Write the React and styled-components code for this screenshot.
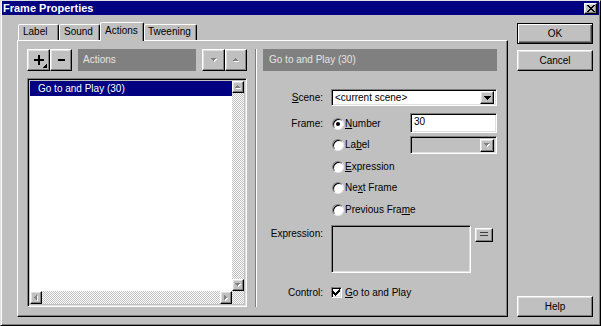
import React from 'react';
import styled, { createGlobalStyle, css } from 'styled-components';

const Global = createGlobalStyle`
  html, body { margin: 0; padding: 0; background: #c0c0c0; }
  body {
    font-family: "Liberation Sans", Arial, sans-serif;
    font-size: 10px;
    color: #000;
    -webkit-font-smoothing: antialiased;
  }
  * { box-sizing: border-box; }
`;

const raised = css`
  border: 1px solid;
  border-color: #fff #000 #000 #fff;
  box-shadow: inset -1px -1px #808080, inset 1px 1px #dfdfdf;
`;

const sunken = css`
  border: 1px solid;
  border-color: #808080 #fff #fff #808080;
  box-shadow: inset 1px 1px #000, inset -1px -1px #dfdfdf;
`;

const dither = css`
  background: repeating-conic-gradient(#c0c0c0 0% 25%, #fff 0% 50%) 0 0 / 2px 2px;
`;

const Window = styled.div`
  width: 601px;
  height: 326px;
  background: #c0c0c0;
  border: 1px solid;
  border-color: #dfdfdf #000 #000 #dfdfdf;
  box-shadow: inset 1px 1px #fff, inset -1px -1px #808080;
  padding: 0 1px;
  display: flex;
  flex-direction: column;
  overflow: hidden;
`;

const TitleBar = styled.div`
  height: 14px;
  flex: none;
  background: #000080;
  display: flex;
  align-items: center;
  justify-content: space-between;
  padding: 0 2px 0 1px;
`;

const Title = styled.span`
  color: #fff;
  font-weight: bold;
  font-size: 11px;
  line-height: 14px;
`;

const CloseButton = styled.div`
  width: 13px;
  height: 11px;
  background: #c0c0c0;
  ${raised};
  display: flex;
  align-items: center;
  justify-content: center;
`;

const Body = styled.div`
  flex: 1;
  display: flex;
  align-items: flex-start;
  gap: 9px;
  padding: 7px 6px 0 15px;
`;

const TabControl = styled.div`
  width: 491px;
  height: 295px;
  display: flex;
  flex-direction: column;
`;

const TabStrip = styled.div`
  height: 18px;
  flex: none;
  display: flex;
  align-items: flex-end;
  padding-left: 1px;
`;

const Tab = styled.div`
  width: ${p => p.$w}px;
  height: ${p => (p.$active ? 19 : 16)}px;
  margin-bottom: ${p => (p.$active ? -1 : 0)}px;
  position: relative;
  z-index: ${p => (p.$active ? 1 : 0)};
  background: #c0c0c0;
  border: 1px solid;
  border-bottom: none;
  border-color: #fff #000 transparent #fff;
  box-shadow: inset -1px 0 #808080;
  border-radius: 2px 2px 0 0;
  padding-left: ${p => p.$pad}px;
  line-height: ${p => (p.$active ? 16 : 14)}px;
  white-space: nowrap;
`;

const Panel = styled.div`
  flex: 1;
  display: flex;
  border: 1px solid;
  border-color: #fff #000 #000 #fff;
  box-shadow: inset -1px -1px #808080;
  padding: 8px 10px 9px 9px;
`;

const LeftPane = styled.div`
  width: 220px;
  display: flex;
  flex-direction: column;
  gap: 7px;
`;

const Toolbar = styled.div`
  height: 22px;
  display: flex;
`;

const ToolButton = styled.div`
  width: ${p => p.$w}px;
  height: 22px;
  margin-left: ${p => p.$ml || 0}px;
  background: #c0c0c0;
  ${raised};
  display: flex;
  align-items: center;
  justify-content: center;
  position: relative;
`;

const CornerMark = styled.svg`
  position: absolute;
  right: 2px;
  bottom: 2px;
`;

const PaneHeader = styled.div`
  width: ${p => (p.$w ? `${p.$w}px` : 'auto')};
  height: 22px;
  margin-left: ${p => p.$ml || 0}px;
  background: #808080;
  color: #e4e4e4;
  line-height: 22px;
  padding-left: ${p => p.$pl}px;
  white-space: nowrap;
`;

const ListBox = styled.div`
  flex: 1;
  ${sunken};
  padding: 2px;
  display: grid;
  grid-template-columns: 1fr 12px;
  grid-template-rows: 1fr 13px;
`;

const ListArea = styled.div`
  background: #fff;
`;

const ListItem = styled.div`
  height: 15px;
  line-height: 15px;
  padding-left: 8px;
  background: ${p => (p.$selected ? '#000080' : 'transparent')};
  color: ${p => (p.$selected ? '#fff' : '#000')};
  white-space: nowrap;
`;

const VScroll = styled.div`
  display: flex;
  flex-direction: column;
  ${dither};
`;

const HScroll = styled.div`
  display: flex;
  ${dither};
`;

const ScrollButton = styled.div`
  width: 12px;
  height: ${p => (p.$h ? p.$h : 12)}px;
  flex: none;
  background: #c0c0c0;
  ${raised};
  display: flex;
  align-items: center;
  justify-content: center;
`;

const Track = styled.div`
  flex: 1;
`;

const Corner = styled.div`
  ${dither};
`;

const Separator = styled.div`
  width: 2px;
  margin: 0 6px 0 8px;
  border-left: 1px solid #808080;
  border-right: 1px solid #fff;
`;

const RightPane = styled.div`
  width: 234px;
  display: flex;
  flex-direction: column;
`;

const FieldRow = styled.div`
  display: flex;
  align-items: ${p => p.$align || 'center'};
  margin-top: ${p => p.$mt}px;
  height: ${p => (p.$h ? `${p.$h}px` : 'auto')};
`;

const FieldLabel = styled.div`
  width: 60px;
  flex: none;
  margin-right: 8px;
  text-align: right;
  line-height: ${p => p.$lh || 12}px;
  padding-top: ${p => p.$pt || 0}px;
  white-space: nowrap;
`;

const Select = styled.div`
  flex: 1;
  height: 17px;
  ${sunken};
  background: ${p => (p.$disabled ? '#c0c0c0' : '#fff')};
  display: flex;
  align-items: center;
  padding: 2px 2px 2px 3px;
  width: ${p => (p.$w ? `${p.$w}px` : 'auto')};
`;

const SelectText = styled.span`
  flex: 1;
  line-height: 12px;
  white-space: nowrap;
`;

const DropButton = styled.div`
  width: 14px;
  height: 13px;
  flex: none;
  background: #c0c0c0;
  ${raised};
  display: flex;
  align-items: center;
  justify-content: center;
`;

const RadioList = styled.div`
  flex: 1;
  display: flex;
  flex-direction: column;
`;

const RadioRow = styled.div`
  height: 21.5px;
  display: flex;
  align-items: center;
  padding-left: 1px;
`;

const RadioCircle = styled.span`
  width: 12px;
  height: 12px;
  flex: none;
  border-radius: 50%;
  background: #fff;
  border: 1px solid;
  border-color: #808080 #e8e8e8 #e8e8e8 #808080;
  box-shadow: inset 1px 1px #000;
  display: flex;
  align-items: center;
  justify-content: center;
  &::after {
    content: '';
    width: 4px;
    height: 4px;
    border-radius: 50%;
    background: #000;
    display: ${p => (p.$checked ? 'block' : 'none')};
  }
`;

const OptionText = styled.span`
  margin-left: ${p => p.$ml || 1}px;
  line-height: 12px;
  white-space: nowrap;
`;

const TextInput = styled.div`
  margin-left: auto;
  align-self: flex-start;
  width: 87px;
  height: 20px;
  ${sunken};
  background: #fff;
  padding: 2px 3px;
  line-height: 12px;
`;

const DisabledCombo = styled.div`
  margin-left: auto;
  width: 87px;
  height: 18px;
  ${sunken};
  background: #c0c0c0;
  display: flex;
  justify-content: flex-end;
  align-items: center;
  padding: 2px;
`;

const TextArea = styled.div`
  width: 140px;
  height: 48px;
  flex: none;
  ${sunken};
  background: #c0c0c0;
`;

const SmallButton = styled.div`
  width: 18px;
  height: 14px;
  margin: 3px 0 0 4px;
  background: #c0c0c0;
  ${raised};
  display: flex;
  align-items: center;
  justify-content: center;
`;

const CheckBox = styled.span`
  width: 11px;
  height: 11px;
  flex: none;
  ${sunken};
  background: #fff;
  display: flex;
  align-items: center;
  justify-content: center;
`;

const ButtonColumn = styled.div`
  width: 76px;
  height: 295px;
  display: flex;
  flex-direction: column;
  padding-top: 1px;
`;

const DialogButton = styled.div`
  height: 21px;
  margin-top: ${p => (p.$auto ? 'auto' : `${p.$mt || 0}px`)};
  background: #c0c0c0;
  display: flex;
  align-items: center;
  justify-content: center;
  ${p =>
    p.$default
      ? css`
          border: 1px solid #000;
          box-shadow: inset 1px 1px #fff, inset -1px -1px #404040, inset -2px -2px #808080;
        `
      : css`
          border: 1px solid;
          border-color: #fff #000 #000 #fff;
          box-shadow: inset -1px -1px #808080, inset 1px 1px #dfdfdf;
        `}
`;

const paths = {
  md: {
    down: { w: 7, h: 4, d: 'M0 0h7v1h-1v1h-1v1h-1v1h-1v-1h-1v-1h-1v-1h-1z' },
    up: { w: 7, h: 4, d: 'M3 0h1v1h1v1h1v1h1v1h-7v-1h1v-1h1v-1h1z' },
  },
  sm: {
    down: { w: 5, h: 3, d: 'M0 0h5v1h-1v1h-1v1h-1v-1h-1v-1h-1z' },
    up: { w: 5, h: 3, d: 'M2 0h1v1h1v1h1v1h-5v-1h1v-1h1z' },
    right: { w: 3, h: 5, d: 'M0 0h1v1h1v1h1v1h-1v1h-1v1h-1z' },
    left: { w: 3, h: 5, d: 'M2 0h1v5h-1v-1h-1v-1h-1v-1h1v-1h1z' },
  },
};

function Arrow({ dir, size = 'md', disabled }) {
  const s = paths[size][dir];
  const pad = disabled ? 1 : 0;
  return (
    <svg width={s.w + pad} height={s.h + pad} viewBox={`0 0 ${s.w + pad} ${s.h + pad}`} shapeRendering="crispEdges">
      {disabled && <path d={s.d} fill="#fff" transform="translate(1 1)" />}
      <path d={s.d} fill={disabled ? '#808080' : '#000'} />
    </svg>
  );
}

export default function App() {
  return (
    <>
      <Global />
      <Window>
        <TitleBar>
          <Title>Frame Properties</Title>
          <CloseButton>
            <svg width="8" height="7" viewBox="0 0 8 7" shapeRendering="crispEdges">
              <path d="M0 0h2v1h1v1h2v-1h1v-1h2v1h-1v1h-1v1h-1v1h1v1h1v1h1v1h-2v-1h-1v-1h-2v1h-1v1h-2v-1h1v-1h1v-1h1v-1h-1v-1h-1v-1h-1z" fill="#000" />
            </svg>
          </CloseButton>
        </TitleBar>
        <Body>
          <TabControl>
            <TabStrip>
              <Tab $w={41} $pad={4}>Label</Tab>
              <Tab $w={41} $pad={4}>Sound</Tab>
              <Tab $w={44} $pad={4} $active>Actions</Tab>
              <Tab $w={53} $pad={3}>Tweening</Tab>
            </TabStrip>
            <Panel>
              <LeftPane>
                <Toolbar>
                  <ToolButton $w={23}>
                    <svg width="10" height="10" viewBox="0 0 10 10" shapeRendering="crispEdges">
                      <rect x="4" y="0" width="2" height="10" fill="#000" />
                      <rect x="0" y="4" width="10" height="2" fill="#000" />
                    </svg>
                    <CornerMark width="4" height="4" viewBox="0 0 4 4" shapeRendering="crispEdges">
                      <path d="M3 0h1v4h-4v-1h1v-1h1v-1h1z" fill="#000" />
                    </CornerMark>
                  </ToolButton>
                  <ToolButton $w={22}>
                    <svg width="7" height="2" viewBox="0 0 7 2" shapeRendering="crispEdges">
                      <rect x="0" y="0" width="7" height="2" fill="#000" />
                    </svg>
                  </ToolButton>
                  <PaneHeader $w={118} $ml={6} $pl={5}>Actions</PaneHeader>
                  <ToolButton $w={23} $ml={6}>
                    <Arrow dir="down" size="sm" disabled />
                  </ToolButton>
                  <ToolButton $w={22}>
                    <Arrow dir="up" size="sm" disabled />
                  </ToolButton>
                </Toolbar>
                <ListBox>
                  <ListArea>
                    <ListItem $selected>Go to and Play (30)</ListItem>
                  </ListArea>
                  <VScroll>
                    <ScrollButton>
                      <Arrow dir="up" size="sm" disabled />
                    </ScrollButton>
                    <Track />
                    <ScrollButton>
                      <Arrow dir="down" size="sm" disabled />
                    </ScrollButton>
                  </VScroll>
                  <HScroll>
                    <ScrollButton $h={13}>
                      <Arrow dir="left" size="sm" disabled />
                    </ScrollButton>
                    <Track />
                    <ScrollButton $h={13}>
                      <Arrow dir="right" size="sm" disabled />
                    </ScrollButton>
                  </HScroll>
                  <Corner />
                </ListBox>
              </LeftPane>
              <Separator />
              <RightPane>
                <PaneHeader $pl={6}>Go to and Play (30)</PaneHeader>
                <FieldRow $mt={18}>
                  <FieldLabel>
                    <u>S</u>cene:
                  </FieldLabel>
                  <Select>
                    <SelectText>&lt;current scene&gt;</SelectText>
                    <DropButton>
                      <Arrow dir="down" />
                    </DropButton>
                  </Select>
                </FieldRow>
                <FieldRow $mt={7} $align="flex-start">
                  <FieldLabel $lh={21.5}>Frame:</FieldLabel>
                  <RadioList>
                    <RadioRow>
                      <RadioCircle $checked />
                      <OptionText>
                        <u>N</u>umber
                      </OptionText>
                      <TextInput>30</TextInput>
                    </RadioRow>
                    <RadioRow>
                      <RadioCircle />
                      <OptionText>
                        La<u>b</u>el
                      </OptionText>
                      <DisabledCombo>
                        <DropButton>
                          <Arrow dir="down" size="sm" disabled />
                        </DropButton>
                      </DisabledCombo>
                    </RadioRow>
                    <RadioRow>
                      <RadioCircle />
                      <OptionText>
                        <u>E</u>xpression
                      </OptionText>
                    </RadioRow>
                    <RadioRow>
                      <RadioCircle />
                      <OptionText>
                        Ne<u>x</u>t Frame
                      </OptionText>
                    </RadioRow>
                    <RadioRow>
                      <RadioCircle />
                      <OptionText>
                        Previous Fra<u>m</u>e
                      </OptionText>
                    </RadioRow>
                  </RadioList>
                </FieldRow>
                <FieldRow $mt={4} $align="flex-start">
                  <FieldLabel $pt={3}>Expression:</FieldLabel>
                  <TextArea />
                  <SmallButton>
                    <svg width="8" height="5" viewBox="0 0 8 5" shapeRendering="crispEdges">
                      <rect x="0" y="0" width="8" height="1" fill="#404040" />
                      <rect x="0" y="3" width="8" height="1" fill="#404040" />
                    </svg>
                  </SmallButton>
                </FieldRow>
                <FieldRow $mt={13} $h={14}>
                  <FieldLabel>Control:</FieldLabel>
                  <CheckBox>
                    <svg width="7" height="7" viewBox="0 0 7 7" shapeRendering="crispEdges">
                      <path d="M6 0h1v3h-1v1h-1v1h-1v1h-1v1h-1v-1h-1v-1h-1v-3h1v1h1v1h1v-1h1v-1h1v-1h1z" fill="#000" />
                    </svg>
                  </CheckBox>
                  <OptionText $ml={3}>
                    <u>G</u>o to and Play
                  </OptionText>
                </FieldRow>
              </RightPane>
            </Panel>
          </TabControl>
          <ButtonColumn>
            <DialogButton $default>OK</DialogButton>
            <DialogButton $mt={6}>Cancel</DialogButton>
            <DialogButton $auto>Help</DialogButton>
          </ButtonColumn>
        </Body>
      </Window>
    </>
  );
}
